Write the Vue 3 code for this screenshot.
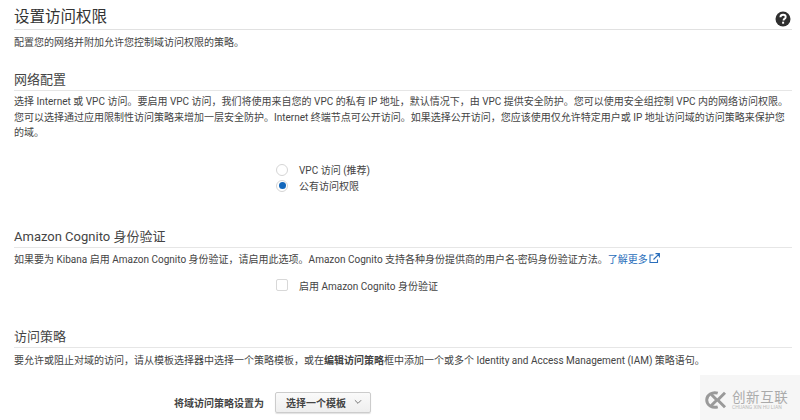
<script setup>
const radios = [
  { label: 'VPC 访问 (推荐)', checked: false },
  { label: '公有访问权限', checked: true }
]
</script>

<template>
  <div class="page">
    <header class="title-row">
      <h1>设置访问权限</h1>
      <svg class="help" width="16" height="16" viewBox="0 0 16 16">
        <circle cx="8" cy="8" r="7.5" fill="#2f2f2f" />
        <path d="M5.4 6.2c.1-1.6 1.2-2.4 2.7-2.4s2.6.8 2.6 2.1c0 1-.6 1.5-1.3 2-.6.4-.8.6-.8 1.2v.3" fill="none" stroke="#fff" stroke-width="1.9" />
        <rect x="7.1" y="10.7" width="2" height="2" fill="#fff" />
      </svg>
    </header>
    <p class="intro">配置您的网络并附加允许您控制域访问权限的策略。</p>

    <section class="net">
      <h2>网络配置</h2>
      <p class="para">选择 Internet 或 VPC 访问。要启用 VPC 访问，我们将使用来自您的 VPC 的私有 IP 地址，默认情况下，由 VPC 提供安全防护。您可以使用安全组控制 VPC 内的网络访问权限。<br>您可以选择通过应用限制性访问策略来增加一层安全防护。Internet 终端节点可公开访问。如果选择公开访问，您应该使用仅允许特定用户或 IP 地址访问域的访问策略来保护您<br>的域。</p>
      <div class="radios">
        <div v-for="r in radios" :key="r.label" class="radio-row">
          <span class="radio" :class="{ on: r.checked }"></span>
          <span>{{ r.label }}</span>
        </div>
      </div>
    </section>

    <section class="cognito">
      <h2>Amazon Cognito 身份验证</h2>
      <p class="para">如果要为 Kibana 启用 Amazon Cognito 身份验证，请启用此选项。Amazon Cognito 支持各种身份提供商的用户名-密码身份验证方法。<a class="link">了解更多<svg width="11" height="11" viewBox="0 0 11 11" fill="none" stroke="#2a6ebb" stroke-width="1.1"><path d="M8.5 6.5v3h-7.5v-7.500h3.500" /><path d="M4.500 6.500l5.500-5.500M6.500 .6h3.900v3.900" /></svg></a></p>
      <div class="check-row">
        <span class="check"></span>
        <span>启用 Amazon Cognito 身份验证</span>
      </div>
    </section>

    <section class="policy">
      <h2>访问策略</h2>
      <p class="para">要允许或阻止对域的访问，请从模板选择器中选择一个策略模板，或在<b>编辑访问策略</b>框中添加一个或多个 Identity and Access Management (IAM) 策略语句。</p>
      <div class="select-row">
        <b class="select-label">将域访问策略设置为</b>
        <button class="select">选择一个模板
          <svg width="8" height="6" viewBox="0 0 9 6" fill="none" stroke="#666" stroke-width="1"><path d="M1 1l3.500 3.500 3.500-3.500" /></svg>
        </button>
      </div>
    </section>

    <div class="mark">
      <svg width="24" height="20" viewBox="0 0 26 22" fill="none" stroke="#9a9a9a" stroke-width="3.200">
        <path d="M16 3.500a9 8 0 1 0 0 15" />
        <path d="M9 5l6 6-6 6" />
        <path d="M24 3l-8 8 8 8" />
      </svg>
      <div class="mark-text">
        <span class="mark-cn">创新互联</span>
        <span class="mark-en">CHUANG XIN HU LIAN</span>
      </div>
    </div>
  </div>
</template>

<style>
html, body { margin: 0; background: #fff; overflow: hidden; }
</style>

<style scoped>
.page {
  position: relative;
  width: 800px;
  height: 420px;
  overflow: hidden;
  padding: 0 8px 0 14px;
  box-sizing: border-box;
  font-family: Roboto, "Noto Sans CJK SC", sans-serif;
  font-size: 10px;
  color: #444;
}
.title-row {
  display: flex;
  justify-content: space-between;
  align-items: center;
  height: 29px;
  border-bottom: 1px solid #e1e1e1;
  padding-right: 2px;
}
h1 {
  margin: 0;
  font-size: 15.500px;
  font-weight: 400;
  color: #333;
}
.help { margin-top: 8px; margin-right: -1px; }
.intro { margin: 5px 0 0; line-height: 15px; }
h2 {
  margin: 0;
  font-size: 13px;
  font-weight: 400;
  line-height: 19px;
  color: #444;
  padding-bottom: 1px;
  border-bottom: 1px solid #e6e6e6;
}
.para { margin: 3px 0 0; line-height: 15.500px; white-space: nowrap; }
.net { margin-top: 20px; }
.radios { margin: 21px 0 0 262px; display: flex; flex-direction: column; }
.radio-row { display: flex; align-items: center; gap: 11px; height: 16px; }
.radio {
  width: 10px;
  height: 10px;
  border-radius: 50%;
  border: 1px solid #d5d5d5;
  background: #fff;
  position: relative;
}
.radio.on::after {
  content: "";
  position: absolute;
  inset: 1.500px;
  border-radius: 50%;
  background: #1166bb;
}
.cognito { margin-top: 33px; }
.cognito .para { margin-top: 4px; }
.check-row { display: flex; align-items: center; gap: 11px; margin: 10px 0 0 262px; height: 16px; }
.check { width: 10px; height: 10px; border: 1px solid #d8d8d8; border-radius: 2px; }
.link { color: #2a6ebb; }
.link svg { vertical-align: -1px; margin-left: 1px; }
.policy { margin-top: 34px; }
.policy .para { margin-top: 5px; }
b { font-weight: 700; }
.select-row { display: flex; align-items: center; gap: 11px; margin: 23px 0 0 160px; }
.select-label { color: #444; }
.select {
  display: flex;
  align-items: center;
  gap: 8px;
  height: 21px;
  padding: 0 8px 0 10px;
  font: inherit;
  font-weight: 700;
  color: #444;
  background: linear-gradient(#fafafa, #eee);
  border: 1px solid #ccc;
  border-radius: 2px;
  box-shadow: 0 1px 1px rgba(0,0,0,.12);
}
.mark {
  position: absolute;
  right: 0;
  bottom: 0;
  width: 100px;
  height: 45px;
  background: #f6f6f6;
  box-sizing: border-box;
  padding: 15px 0 0 3px;
  display: flex;
  gap: 5px;
  align-items: flex-start;
}
.mark-text { display: flex; flex-direction: column; }
.mark-cn { font-size: 13.500px; line-height: 15px; color: #aaa; letter-spacing: .6px; }
.mark-en { font-size: 5px; line-height: 5px; color: #bbb; white-space: nowrap; }
</style>
